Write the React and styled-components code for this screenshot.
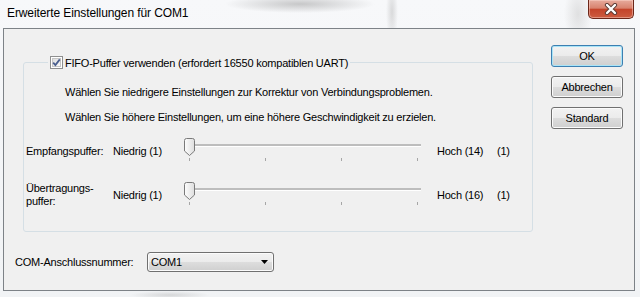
import React, { useId } from 'react';
import styled, { createGlobalStyle } from 'styled-components';

const GlobalStyle = createGlobalStyle`
  html, body { margin: 0; padding: 0; }
  body {
    font-family: "Liberation Sans", Arial, sans-serif;
    font-size: 11px;
    letter-spacing: -0.22px;
    color: #000;
  }
`;

const Window = styled.div`
  width: 640px;
  height: 297px;
  display: flex;
  flex-direction: column;
  overflow: hidden;
  background:
    radial-gradient(ellipse 75px 9px at 300px 4px, rgba(140,140,140,0.45), transparent),
    radial-gradient(ellipse 6px 30px at 392px 12px, rgba(160,160,160,0.35), transparent),
    radial-gradient(ellipse 14px 30px at 578px 14px, rgba(200,200,200,0.5), transparent),
    radial-gradient(ellipse 40px 4px at 170px 295px, rgba(150,150,150,0.3), transparent),
    linear-gradient(#f7f8fa, #f1f3f5);
`;

const TitleBar = styled.div`
  height: 28px;
  flex-shrink: 0;
  display: flex;
  justify-content: space-between;
  align-items: flex-start;
`;

const Title = styled.div`
  margin: 6px 0 0 7px;
  font-size: 12px;
  line-height: 15px;
  letter-spacing: -0.1px;
`;

const CloseButton = styled.div`
  width: 46px;
  height: 19px;
  margin-right: 6px;
  box-sizing: border-box;
  border: 1px solid #6b2619;
  border-top: none;
  border-radius: 0 0 5px 5px;
  background: linear-gradient(#e7ab9d 0%, #d8826e 45%, #c4442b 52%, #cc5c40 100%);
  box-shadow: inset 0 0 0 1px rgba(255, 220, 210, 0.45);
  display: flex;
  align-items: center;
  justify-content: center;
`;

const Client = styled.div`
  flex: 1;
  margin: 0 5px 6px 3px;
  border: 1px solid #7d8287;
  background: #f0f0f0;
  display: flex;
`;

const LeftColumn = styled.div`
  padding: 26px 0 0 11px;
  display: flex;
  flex-direction: column;
`;

const GroupBox = styled.fieldset`
  margin: 0 0 0 8px;
  padding: 0 0 0 1px;
  width: 510px;
  height: 177px;
  box-sizing: border-box;
  border: 1px solid #d5dfe5;
  border-radius: 3px;
  display: flex;
  flex-direction: column;
`;

const Legend = styled.legend`
  margin-left: 23px;
  padding: 0 2px;
  height: 15px;
  display: flex;
  align-items: center;
  gap: 2px;
`;

const Note = styled.div`
  margin: ${p => p.$top}px 0 0 40px;
  line-height: 14px;
  white-space: nowrap;
`;

const SliderRow = styled.div`
  margin-top: ${p => p.$top}px;
  height: 26px;
  padding-left: 1px;
  display: flex;
  align-items: center;
`;

const RowLabel = styled.div`
  width: 87px;
  line-height: 13px;
`;

const LowLabel = styled.div`
  width: 68px;
`;

const HighLabel = styled.div`
  width: 60px;
  margin-left: 12px;
`;

const RightColumn = styled.div`
  margin-left: 18px;
  padding-top: 16px;
  display: flex;
  flex-direction: column;
  gap: 9px;
`;

const Button = styled.div`
  width: 72px;
  height: 22px;
  box-sizing: border-box;
  border: 1px solid ${p => (p.$default ? '#3c7fb1' : '#707070')};
  border-radius: 3px;
  background: linear-gradient(#f2f2f2 0%, #ebebeb 50%, #dddddd 51%, #cfcfcf 100%);
  box-shadow: inset 0 0 0 1px ${p => (p.$default ? '#a9e4f7' : '#fbfbfb')};
  display: flex;
  align-items: center;
  justify-content: center;
  font-size: 11px;
`;

const ComRow = styled.div`
  margin-top: 20px;
  height: 20px;
  display: flex;
  align-items: center;
`;

const ComLabel = styled.div`
  width: 132px;
`;

const Combo = styled.div`
  width: 127px;
  height: 20px;
  box-sizing: border-box;
  border: 1px solid #707070;
  border-radius: 3px;
  background: linear-gradient(#f2f2f2 0%, #ebebeb 50%, #dddddd 51%, #cfcfcf 100%);
  box-shadow: inset 0 0 0 1px #fbfbfb;
  padding: 0 5px 0 3px;
  display: flex;
  align-items: center;
  justify-content: space-between;
`;

const CheckBox = () => {
  const id = useId();
  return (
    <svg width="13" height="13" viewBox="0 0 13 13">
      <defs>
        <linearGradient id={id} x1="0" y1="0" x2="1" y2="1">
          <stop offset="0" stopColor="#dcdcdc" />
          <stop offset="1" stopColor="#fbfbfb" />
        </linearGradient>
      </defs>
      <rect x="0.5" y="0.5" width="12" height="12" fill="#fff" stroke="#8e8f8f" />
      <rect x="2.5" y="2.5" width="8" height="8" fill={`url(#${id})`} stroke="#c6c6c6" />
      <path d="M3.2 6.6 L5.4 9 L9.8 3.4" fill="none" stroke="#4a5f8f" strokeWidth="1.8" />
    </svg>
  );
};

const Slider = () => {
  const id = useId();
  const ticks = [8, 84, 160, 236];
  return (
    <svg width="244" height="26" viewBox="0 0 244 26">
      <defs>
        <linearGradient id={id} x1="0" y1="0" x2="1" y2="0">
          <stop offset="0" stopColor="#fdfdfd" />
          <stop offset="1" stopColor="#dedede" />
        </linearGradient>
      </defs>
      <rect x="4" y="6" width="236" height="2" fill="#bdbdbd" />
      <rect x="4" y="8" width="236" height="1" fill="#ffffff" />
      {ticks.map(x => (
        <rect key={x} x={x} y="20" width="1" height="3" fill="#a6a6a6" />
      ))}
      <path
        d="M3.5 2.5 Q3.5 0.5 5.5 0.5 H11.5 Q13.5 0.5 13.5 2.5 V13 L8.5 17.5 L3.5 13 Z"
        fill={`url(#${id})`}
        stroke="#7a7a7a"
      />
    </svg>
  );
};

const SliderLine = ({ top, label, high }) => (
  <SliderRow $top={top}>
    <RowLabel>{label}</RowLabel>
    <LowLabel>Niedrig (1)</LowLabel>
    <Slider />
    <HighLabel>{high}</HighLabel>
    <div>(1)</div>
  </SliderRow>
);

export default function App() {
  return (
    <Window>
      <GlobalStyle />
      <TitleBar>
        <Title>Erweiterte Einstellungen für COM1</Title>
        <CloseButton>
          <svg width="14" height="12" viewBox="0 0 14 12">
            <path d="M3 2 L11 10 M11 2 L3 10" stroke="#5a3a34" strokeWidth="4.2" strokeLinecap="round" />
            <path d="M3 2 L11 10 M11 2 L3 10" stroke="#ffffff" strokeWidth="2.4" strokeLinecap="round" />
          </svg>
        </CloseButton>
      </TitleBar>
      <Client>
        <LeftColumn>
          <GroupBox>
            <Legend>
              <CheckBox />
              <span>FIFO-Puffer verwenden (erfordert 16550 kompatiblen UART)</span>
            </Legend>
            <Note $top={15}>Wählen Sie niedrigere Einstellungen zur Korrektur von Verbindungsproblemen.</Note>
            <Note $top={11}>Wählen Sie höhere Einstellungen, um eine höhere Geschwindigkeit zu erzielen.</Note>
            <SliderLine top={14} label="Empfangspuffer:" high="Hoch (14)" />
            <SliderLine top={18} label={<>Übertragungs-<br />puffer:</>} high="Hoch (16)" />
          </GroupBox>
          <ComRow>
            <ComLabel>COM-Anschlussnummer:</ComLabel>
            <Combo>
              <span>COM1</span>
              <svg width="7" height="4" viewBox="0 0 7 4">
                <path d="M0 0 H7 L3.5 4 Z" fill="#000" />
              </svg>
            </Combo>
          </ComRow>
        </LeftColumn>
        <RightColumn>
          <Button $default>OK</Button>
          <Button>Abbrechen</Button>
          <Button>Standard</Button>
        </RightColumn>
      </Client>
    </Window>
  );
}
